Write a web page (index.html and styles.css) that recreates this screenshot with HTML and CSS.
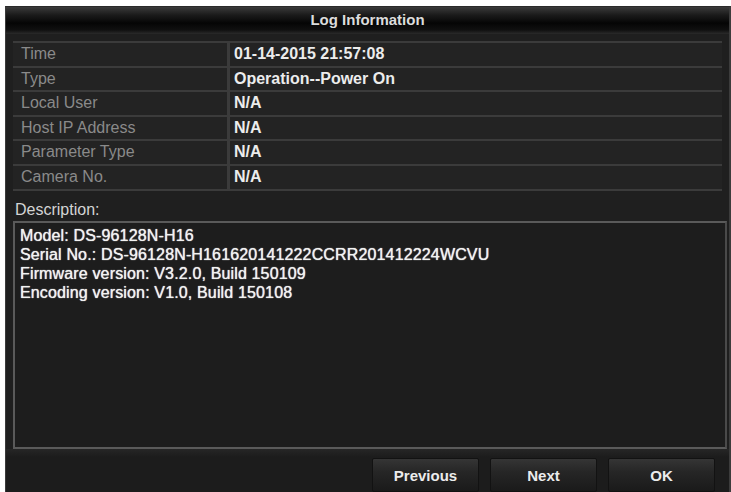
FILE: index.html
```html
<!DOCTYPE html>
<html>
<head>
<meta charset="utf-8">
<link rel="stylesheet" href="styles.css">
</head>
<body>
<div class="dialog">
  <div class="title">Log Information</div>
  <div class="content">
    <div class="table">
      <div class="cell label">Time</div><div class="cell value">01-14-2015 21:57:08</div>
      <div class="cell label">Type</div><div class="cell value">Operation--Power On</div>
      <div class="cell label">Local User</div><div class="cell value">N/A</div>
      <div class="cell label">Host IP Address</div><div class="cell value">N/A</div>
      <div class="cell label">Parameter Type</div><div class="cell value">N/A</div>
      <div class="cell label">Camera No.</div><div class="cell value">N/A</div>
    </div>
    <div class="desc-label">Description:</div>
    <div class="desc-box">
      <div>Model: DS-96128N-H16</div>
      <div>Serial No.: DS-96128N-H161620141222CCRR201412224WCVU</div>
      <div>Firmware version: V3.2.0, Build 150109</div>
      <div>Encoding version: V1.0, Build 150108</div>
    </div>
  </div>
  <div class="footer">
    <button class="btn btn-prev">Previous</button>
    <button class="btn btn-next">Next</button>
    <button class="btn btn-ok">OK</button>
  </div>
</div>
</body>
</html>
```

FILE: styles.css
```css
html, body {
  margin: 0;
  padding: 0;
  background: #ffffff;
}
body {
  font-family: "Liberation Sans", Arial, sans-serif;
}
.dialog {
  margin: 6px 0 0 5px;
  width: 726px;
  height: 486px;
  box-sizing: border-box;
  background: #1f1f1f;
  border-left: 1px solid #3a3a3a;
  border-right: 2px solid #3c3c3c;
  border-top: 1px solid #2a2a2a;
  display: flex;
  flex-direction: column;
}
.title {
  height: 27px;
  line-height: 26px;
  text-align: center;
  font-size: 15px;
  font-weight: bold;
  color: #dcdcdc;
  background: linear-gradient(to bottom, #3a3a3a 0%, #1a1a1a 30%, #050505 60%, #101010 85%, #2a2a2a 100%);
}
.content {
  padding: 7px 0 0 7px;
  display: flex;
  flex-direction: column;
}
.table {
  width: 709px;
  display: grid;
  grid-template-columns: 214px 1fr;
  grid-template-rows: repeat(6, 22.6px);
  column-gap: 3px;
  row-gap: 2px;
  padding: 2px 0;
  background: #3b3b3b;
}
.cell {
  background: #232323;
  font-size: 16px;
  line-height: 22.6px;
  white-space: nowrap;
}
.label {
  color: #8a8a8a;
  padding-left: 8px;
}
.value {
  color: #ececec;
  font-weight: bold;
  padding-left: 4px;
}
.desc-label {
  margin-top: 9px;
  height: 20px;
  line-height: 20px;
  font-size: 16px;
  color: #d4d4d4;
  padding-left: 2px;
}
.desc-box {
  margin-top: 1px;
  width: 714px;
  height: 228px;
  box-sizing: border-box;
  border: 2px solid #5a5a5a;
  border-right-color: #4a4a4a;
  background: #1d1d1d;
  padding: 3px 0 0 5px;
  font-size: 16px;
  letter-spacing: 0.15px;
  line-height: 19px;
  color: #f2f2f2;
  text-shadow: 0 0 1px #ffffff;
}
.footer {
  flex: 1;
  display: flex;
  justify-content: flex-end;
  align-items: flex-start;
  gap: 11px;
  padding: 9px 14px 0 0;
  background: linear-gradient(to bottom, #262626 0px, #1c1c1c 8px, #1c1c1c 100%);
}
.btn {
  width: 107px;
  height: 34px;
  border: 1px solid #121212;
  border-radius: 2px;
  background: linear-gradient(to bottom, #353535 0%, #262626 40%, #1a1a1a 100%);
  color: #ececec;
  font-family: "Liberation Sans", Arial, sans-serif;
  font-size: 15px;
  font-weight: bold;
  padding: 0;
  padding-top: 2px;
}
```
